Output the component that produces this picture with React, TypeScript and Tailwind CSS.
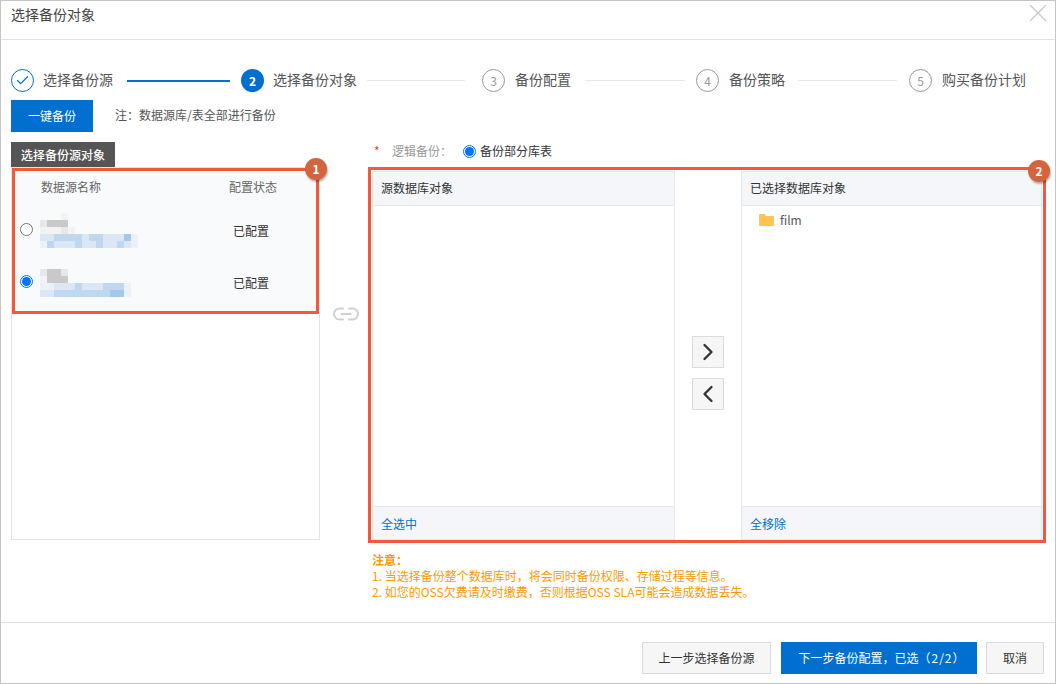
import { Check, ChevronLeft, ChevronRight, X } from "lucide-react";

const font = { fontFamily: '"Noto Sans CJK SC", "Noto Sans", sans-serif' };

const g1 = "#e8e8e8", g2 = "#c9c9c9", g3 = "#f3f3f3", b1 = "#dbe7f5", b2 = "#bfd7ef", b3 = "#a4c8ea", b4 = "#ebf1f9";

function Mosaic({ rows }: { rows: string[][] }) {
  return (
    <svg width="98" height="35" viewBox="0 0 98 35" className="shrink-0">
      {rows.map((row, y) =>
        row.map((c, x) => (c ? <rect key={`${x}-${y}`} x={x * 7} y={y * 7} width="7" height="7" fill={c} /> : null)),
      )}
    </svg>
  );
}

const mosaicA = [
  ["", "", "", g3],
  [g1, g2, g2, g2],
  [g3, g3, g3, g1, g3],
  [b1, b1, b2, b2, b2, b2, b1, b2, b2, b1, b1, b1, b3, b4],
  [b4, b2, b1, b1, b1, b2, b1, b1, b2, b1, b1, b2, b1, b4],
];
const mosaicB = [
  [g1, g2, g2, g1],
  [g3, g2, g2, g2],
  [b4, b4, b1, b1, b1, b2, b1, b1, b1, b2, b2, b2, b4],
  [b1, b1, b2, b2, b2, b2, b2, b2, b2, b2, b3, b3, b4],
];

const steps = [
  { label: "选择备份源", kind: "done", text: "ml-[9px]", line: "ml-[14px] mr-[11px] w-[103px] h-[2px] bg-[#006fcf]" },
  { label: "选择备份对象", n: "2", kind: "active", text: "ml-[9px]", line: "ml-[10px] mr-[17px] w-[98px] h-px bg-[#e8e8e8]" },
  { label: "备份配置", n: "3", kind: "todo", text: "ml-[10px]", line: "ml-[14px] mr-[11px] w-[100px] h-px bg-[#e8e8e8]" },
  { label: "备份策略", n: "4", kind: "todo", text: "ml-[10px]", line: "ml-[13px] mr-[12px] w-[99px] h-px bg-[#e8e8e8]" },
  { label: "购买备份计划", n: "5", kind: "todo", text: "ml-[10px]", line: "" },
];

function Step({ s }: { s: (typeof steps)[number] }) {
  return (
    <div className="flex items-center">
      {s.kind === "done" && (
        <span className="flex h-[23px] w-[23px] items-center justify-center rounded-full border border-[#006fcf] text-[#006fcf]">
          <Check size={15} strokeWidth={2} />
        </span>
      )}
      {s.kind === "active" && (
        <span className="flex h-[23px] w-[23px] items-center justify-center rounded-full bg-[#006fcf] text-[12px] font-bold text-white">
          {s.n}
        </span>
      )}
      {s.kind === "todo" && (
        <span className="flex h-[23px] w-[23px] items-center justify-center rounded-full border border-[#999999] text-[12px] text-[#999999]">
          {s.n}
        </span>
      )}
      <span className={`${s.text} mb-[3px] whitespace-nowrap text-[14px] leading-[20px] text-[#555555]`}>{s.label}</span>
      {s.line && <span className={s.line} />}
    </div>
  );
}

function Badge({ n, className }: { n: string; className: string }) {
  return (
    <span
      className={`absolute flex h-[22px] w-[22px] items-center justify-center rounded-full bg-[#d4633f] text-[12px] font-bold text-white shadow-[1px_2px_2px_rgba(0,0,0,0.3)] ${className}`}
    >
      {n}
    </span>
  );
}

function SourceRow({ checked, rows, mosaicClass }: { checked?: boolean; rows: string[][]; mosaicClass: string }) {
  return (
    <div className="flex h-[52px] items-center pl-[5px]">
      {checked ? (
        <span className="flex h-[13px] w-[13px] items-center justify-center rounded-full border border-[#0075ff] bg-white">
          <span className="h-[9px] w-[9px] rounded-full bg-[#0075ff]" />
        </span>
      ) : (
        <span className="h-[13px] w-[13px] rounded-full border border-[#767676] bg-white" />
      )}
      <span className={`ml-[7px] w-[193px] self-start ${mosaicClass}`}>
        <Mosaic rows={rows} />
      </span>
      <span className="mt-[4px] text-[12px] text-[#333333]">已配置</span>
    </div>
  );
}

function TransferPanel({ title, action, children, className }: { title: string; action: string; children?: React.ReactNode; className: string }) {
  return (
    <div className={`flex flex-col border border-[#e3e8ee] ${className}`}>
      <div className="flex h-[34px] shrink-0 items-center border-b border-[#e3e8ee] bg-[#f4f6fa] pb-[2px] pl-[8px] text-[12px] text-[#333333]">
        {title}
      </div>
      <div className="flex-1">{children}</div>
      <div className="flex h-[33px] shrink-0 items-center border-t border-[#e3e8ee] bg-[#f4f6fa] pl-[8px] pt-[2px] text-[12px] text-[#006fcf]">
        {action}
      </div>
    </div>
  );
}

export default function App() {
  return (
    <div className="flex h-[684px] w-[1056px] flex-col overflow-hidden border border-[#c4c4c4] bg-white" style={font}>
      <div className="relative flex h-[39px] shrink-0 border-b border-[#e2e2e2] pl-[10px] pt-[3px]">
        <span className="text-[14px] leading-[20px] text-[#444444]">选择备份对象</span>
        <X className="absolute right-[2px] top-[-3px] text-[#c8c8c8]" size={30} strokeWidth={1.1} />
      </div>

      <div className="flex-1 px-[10px]">
        <div className="mt-[29px] flex h-[23px] items-center">
          {steps.map((s) => (
            <Step key={s.label} s={s} />
          ))}
        </div>

        <div className="mt-[8px] flex h-[32px] items-center">
          <button className="h-[32px] w-[82px] bg-[#006fcf] text-[12px] text-white">一键备份</button>
          <span className="mb-[2px] ml-[22px] text-[12px] text-[#555555]">注：数据源库/表全部进行备份</span>
        </div>

        <div className="mt-[10px] flex">
          <div className="flex h-[398px] w-[309px] shrink-0 flex-col">
            <div className="flex h-[25px] w-[104px] items-center justify-center bg-[#555555] text-[12px] font-medium text-white">
              选择备份源对象
            </div>
            <div className="relative flex-1 border border-[#e5e5e5]">
              <div className="relative h-[146px] border-[3px] border-[#f2593a] bg-[#f9fafb]">
                <div className="flex h-[31px] items-center text-[12px] text-[#666666]">
                  <span className="ml-[26px] w-[188px]">数据源名称</span>
                  <span>配置状态</span>
                </div>
                <div className="mt-[1px]">
                  <SourceRow rows={mosaicA} mosaicClass="mt-[10px]" />
                  <SourceRow checked rows={mosaicB} mosaicClass="mt-[14px]" />
                </div>
                <Badge n="1" className="right-[-11px] top-[-13px]" />
              </div>
            </div>
          </div>

          <div className="flex w-[52px] shrink-0 justify-center pt-[165px]">
            <svg width="28" height="14" viewBox="0 0 28 14" fill="none" stroke="#d0d0d0" strokeWidth="2" strokeLinecap="round">
              <path d="M11 1.5H7.5a5.5 5.5 0 0 0 0 11H11" />
              <path d="M17 1.5h3.5a5.5 5.5 0 0 1 0 11H17" />
              <path d="M9.5 7h9" />
            </svg>
          </div>

          <div className="flex-1">
            <div className="flex h-[18px] items-center text-[12px]">
              <span className="ml-[2px] w-[18px] text-[#ff3333]">*</span>
              <span className="w-[71px] text-[#999999]">逻辑备份：</span>
              <span className="flex h-[13px] w-[13px] items-center justify-center rounded-full border border-[#0075ff] bg-white">
                <span className="h-[9px] w-[9px] rounded-full bg-[#0075ff]" />
              </span>
              <span className="ml-[4px] text-[#333333]">备份部分库表</span>
            </div>
            <div className="relative mt-[11px] flex h-[369px] w-[670px]">
              <TransferPanel title="源数据库对象" action="全选中" className="w-[303px]" />
              <div className="flex w-[66px] shrink-0 flex-col items-center gap-[10px] pt-[165px]">
                <button className="flex h-[32px] w-[32px] items-center justify-center border border-[#dcdcdc] bg-[#f6f6f6] text-[#333333]">
                  <ChevronRight size={28} strokeWidth={2} />
                </button>
                <button className="flex h-[32px] w-[32px] items-center justify-center border border-[#dcdcdc] bg-[#f6f6f6] text-[#333333]">
                  <ChevronLeft size={28} strokeWidth={2} />
                </button>
              </div>
              <TransferPanel title="已选择数据库对象" action="全移除" className="w-[301px]">
                <div className="flex h-[28px] items-center pl-[17px] text-[12px] text-[#555555]">
                  <svg width="15" height="12" viewBox="0 0 15 12">
                    <path d="M0 1a1 1 0 0 1 1-1h5l1 2h7a1 1 0 0 1 1 1v8a1 1 0 0 1-1 1H1a1 1 0 0 1-1-1z" fill="#ffc453" />
                  </svg>
                  <span className="ml-[6px]">film</span>
                </div>
              </TransferPanel>
              <div className="pointer-events-none absolute bottom-[-3px] left-[-4px] right-[-4px] top-[-4px] border-[3px] border-[#f2593a]" />
              <Badge n="2" className="right-[-8px] top-[-11px]" />
            </div>
            <div className="mt-[12px] text-[12px] leading-[16px] text-[#ff9900]">
              <div className="font-bold">注意：</div>
              <div>1. 当选择备份整个数据库时，将会同时备份权限、存储过程等信息。</div>
              <div>2. 如您的OSS欠费请及时缴费，否则根据OSS SLA可能会造成数据丢失。</div>
            </div>
          </div>
        </div>
      </div>

      <div className="flex h-[61px] shrink-0 justify-end border-t border-[#e2e2e2] pr-[11px] pt-[19px]">
        <button className="h-[32px] w-[129px] border border-[#dcdcdc] bg-[#f6f6f6] text-[12px] text-[#333333]">上一步选择备份源</button>
        <button className="ml-[10px] h-[32px] w-[196px] bg-[#006fcf] pl-[6px] text-[12px] text-white">
          下一步备份配置，已选<span className="tracking-[1px]">（2/2）</span>
        </button>
        <button className="ml-[9px] h-[32px] w-[58px] border border-[#dcdcdc] bg-[#f6f6f6] text-[12px] text-[#333333]">取消</button>
      </div>
    </div>
  );
}
